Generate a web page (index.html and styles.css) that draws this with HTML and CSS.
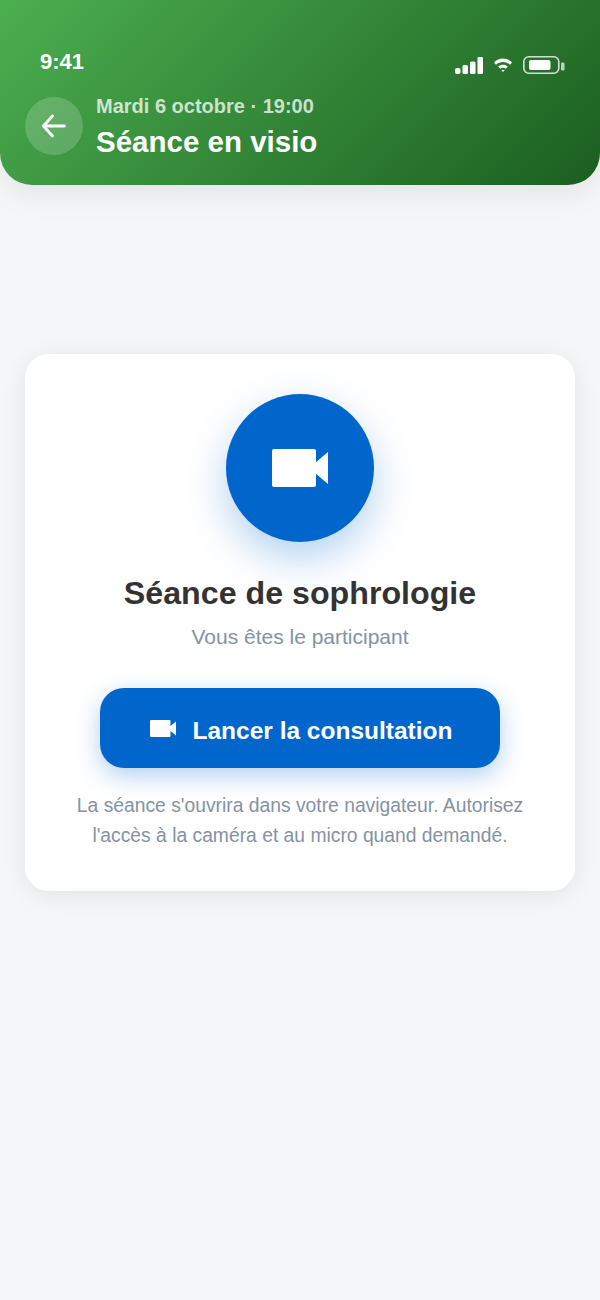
FILE: index.html
```html
<!DOCTYPE html>
<html lang="fr">
<head>
    <meta charset="UTF-8">
    <meta name="viewport" content="width=device-width, initial-scale=1.0">
    <title>Séance en visio</title>
    <link rel="stylesheet" href="styles.css">
</head>
<body>
    <header class="header">
        <div class="status-bar">
            <span class="status-time">9:41</span>
            <div class="status-icons">
                <svg width="28" height="17" viewBox="0 0 28 17" fill="#fff">
                    <rect x="0" y="11" width="5.500" height="6" rx="2"/>
                    <rect x="7.500" y="8" width="5.500" height="9" rx="1.500"/>
                    <rect x="15" y="4.500" width="5.500" height="12.500" rx="1.500"/>
                    <rect x="22.500" y="0" width="5.500" height="17" rx="1.200"/>
                </svg>
                <svg width="18" height="14" viewBox="0 0 18 14" fill="#fff">
                    <path d="M0 4.500C5 -0.800 13 -0.800 18 4.500L16 6.800C12 3 6 3 2 6.800z"/>
                    <path d="M4.200 8.600C7 6 11 6 13.800 8.600L11.800 10.800C10 9.400 8 9.400 6.200 10.800z"/>
                    <path d="M7.200 12.300C8.300 11.500 9.700 11.500 10.800 12.300L9 14z"/>
                </svg>
                <svg width="42" height="18" viewBox="0 0 42 18">
                    <rect x="0.800" y="0.800" width="35" height="16.400" rx="5" fill="none" stroke="#fff" stroke-opacity="0.8" stroke-width="1.600"/>
                    <rect x="6" y="4" width="21.500" height="10" rx="2" fill="#fff"/>
                    <rect x="38" y="6.500" width="3.500" height="8" rx="1.200" fill="#fff" fill-opacity="0.7"/>
                </svg>
            </div>
        </div>
        <div class="header-row">
            <button class="back-btn" aria-label="Retour">
                <svg width="30" height="30" viewBox="0 0 30 30" fill="none" stroke="#fff" stroke-width="2.800" stroke-linecap="round" stroke-linejoin="round">
                    <path d="M25.500 15H4.500"/>
                    <path d="M13.500 5L4.500 15l9 10"/>
                </svg>
            </button>
            <div class="header-text">
                <p class="header-date">Mardi 6 octobre · 19:00</p>
                <h1 class="header-title">Séance en visio</h1>
            </div>
        </div>
    </header>

    <main class="content">
        <section class="card">
            <div class="video-circle">
                <svg width="56" height="38" viewBox="0 0 56 38" fill="#fff">
                    <path d="M2 0h40a2 2 0 0 1 2 2v34a2 2 0 0 1-2 2h-40a2 2 0 0 1-2-2v-34a2 2 0 0 1 2-2z"/>
                    <path d="M43 14L56 3v32L43 24z"/>
                </svg>
            </div>
            <h2 class="card-title">Séance de sophrologie</h2>
            <p class="card-role">Vous êtes le participant</p>
            <button class="start-btn">
                <svg width="26" height="17" viewBox="0 0 26 17" fill="#fff">
                    <path d="M1 0h18.500a1 1 0 0 1 1 1v15a1 1 0 0 1-1 1h-18.500a1 1 0 0 1-1-1v-15a1 1 0 0 1 1-1z"/>
                    <path d="M20 6.500L26 1.500v14L20 10.500z"/>
                </svg>
                <span class="start-label">Lancer la consultation</span>
            </button>
            <p class="card-note">La séance s'ouvrira dans votre navigateur. Autorisez l'accès à la caméra et au micro quand demandé.</p>
        </section>
    </main>
</body>
</html>
```

FILE: styles.css
```css
* {
    box-sizing: border-box;
}

body {
    margin: 0;
    min-height: 1300px;
    background-color: #f4f6f8;
    color: #333333;
    font-family: "Liberation Sans", Arial, sans-serif;
}

p, h1, h2 {
    margin: 0;
}

.header {
    height: 185px;
    padding: 48px 25px 0;
    background: linear-gradient(135deg, #4caf50 0%, #1b5e20 100%);
    border-radius: 0 0 32px 32px;
    box-shadow: 0 8px 32px rgba(0, 0, 0, 0.08);
    color: #fff;
}

.status-bar {
    display: flex;
    justify-content: space-between;
    align-items: center;
    height: 28px;
    padding: 0 10px 0 15px;
}

.status-time {
    font-size: 22px;
    font-weight: 700;
}

.status-icons {
    display: flex;
    align-items: center;
    gap: 11px;
    padding-top: 6px;
}

.header-row {
    display: flex;
    align-items: flex-start;
    gap: 13px;
    margin-top: 17px;
}

.back-btn {
    display: flex;
    align-items: center;
    justify-content: center;
    width: 58px;
    height: 58px;
    margin-top: 4px;
    padding: 0;
    border: none;
    border-radius: 50%;
    background-color: rgba(255, 255, 255, 0.18);
}

.header-date {
    font-size: 20px;
    font-weight: 700;
    line-height: 26px;
    color: rgba(255, 255, 255, 0.75);
}

.header-title {
    font-size: 29.500px;
    font-weight: 700;
    line-height: 46px;
}

.content {
    padding: 169px 25px 0;
}

.card {
    display: flex;
    flex-direction: column;
    align-items: center;
    padding: 40px;
    background-color: #fff;
    border-radius: 24px;
    box-shadow: 0 4px 24px rgba(0, 0, 0, 0.08);
    text-align: center;
}

.video-circle {
    display: flex;
    align-items: center;
    justify-content: center;
    width: 148px;
    height: 148px;
    border-radius: 50%;
    background-color: #0066cc;
    box-shadow: 0 16px 40px rgba(0, 102, 204, 0.3);
}

.card-title {
    margin-top: 30px;
    font-size: 32.200px;
    font-weight: 700;
    line-height: 42px;
}

.card-role {
    margin-top: 9px;
    font-size: 21px;
    line-height: 28px;
    color: #8592a3;
}

.start-btn {
    display: flex;
    align-items: center;
    justify-content: center;
    gap: 16px;
    width: 400px;
    height: 80px;
    margin-top: 37px;
    padding: 0 0 0 3px;
    border: none;
    border-radius: 24px;
    background-color: #0066cc;
    box-shadow: 0 8px 24px rgba(0, 102, 204, 0.3);
    color: #fff;
    font-family: inherit;
    font-size: 24.500px;
    font-weight: 700;
}

.start-label {
    padding-top: 5px;
}

.card-note {
    margin-top: 23px;
    font-size: 19.300px;
    line-height: 30px;
    color: #8592a3;
}
```
